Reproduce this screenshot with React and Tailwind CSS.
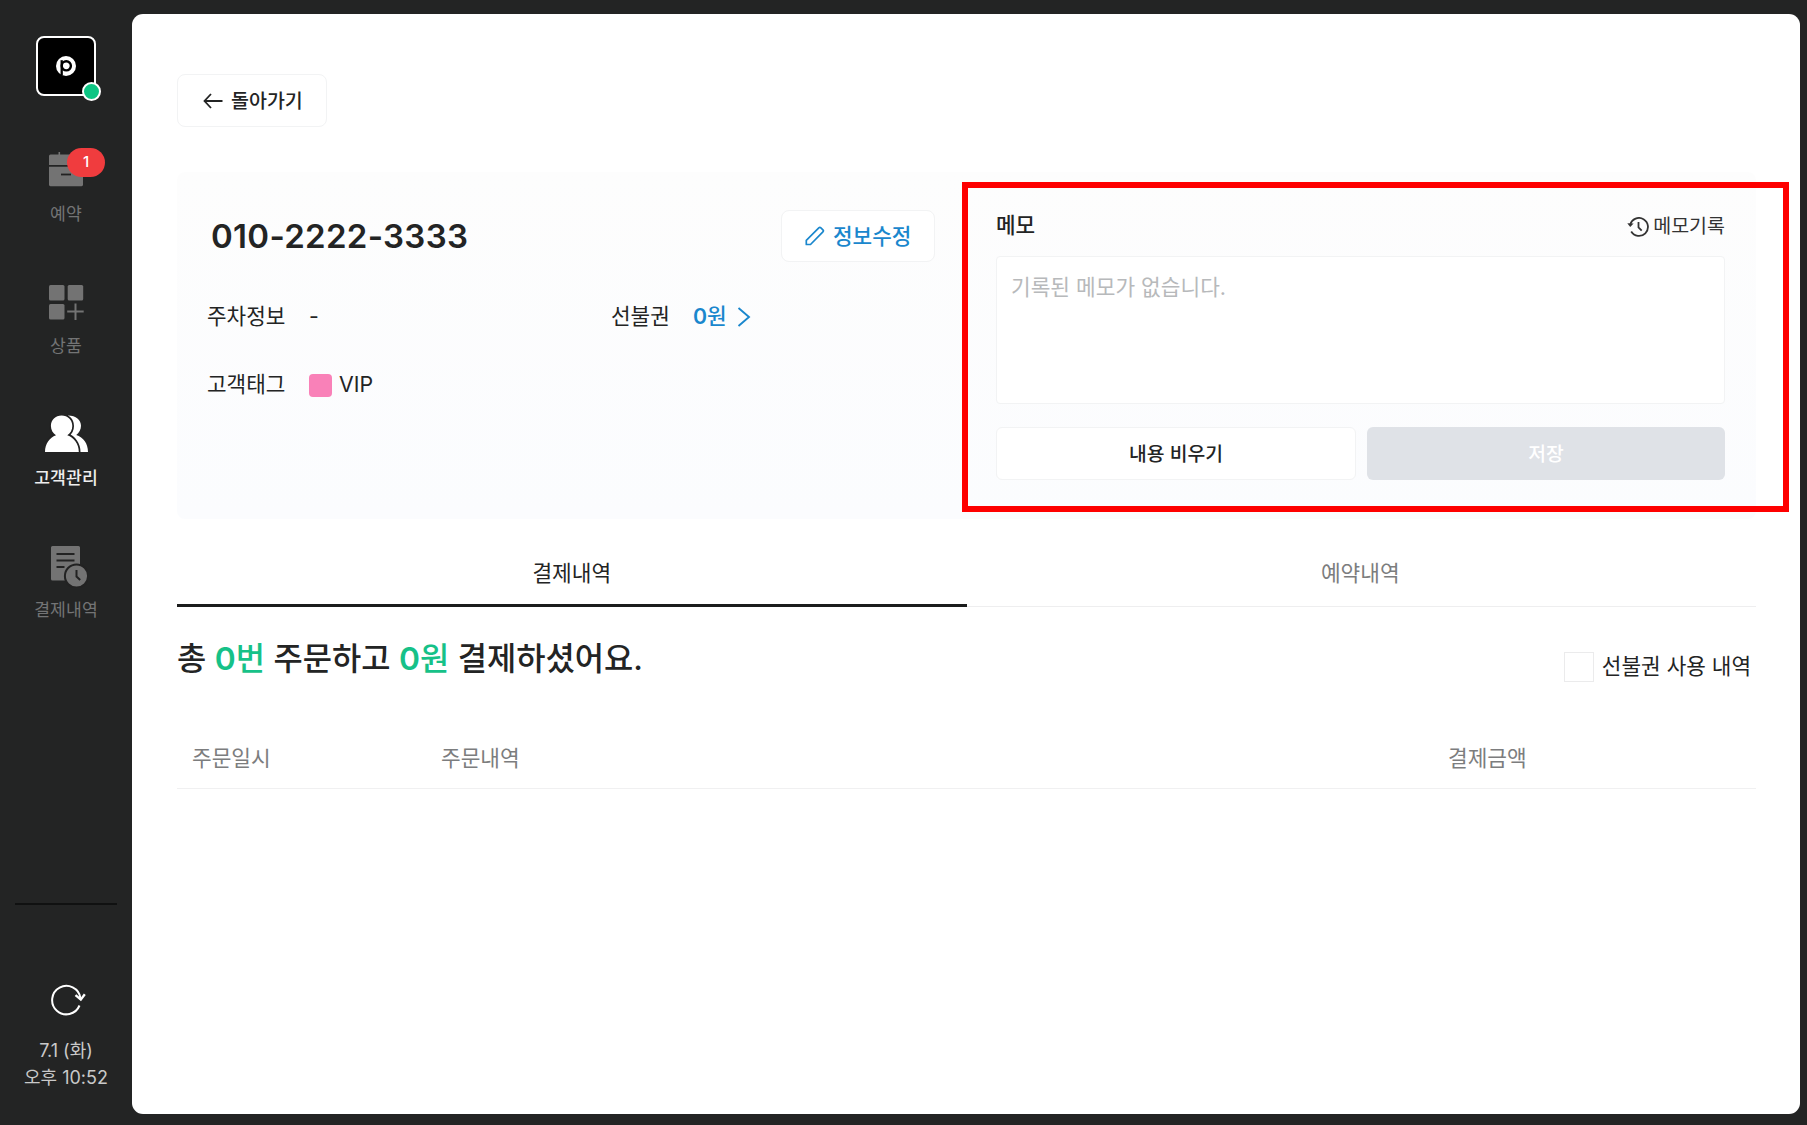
const cardBorder = 'border border-[#f2f3f4]';

function CalendarIcon() {
    return (
        <svg width="34" height="35" viewBox="0 0 34 35" fill="#737373">
            <path d="M9.5 0h1.6v2.5H34V13H0V4a1.5 1.5 0 0 1 1.5-1.5h8z" />
            <path d="M0 14.8h34v18a1.4 1.4 0 0 1-1.4 1.4H1.4A1.4 1.4 0 0 1 0 32.8z" />
            <path d="M12 22.5h10" stroke="#222" strokeWidth="1.8" />
        </svg>
    );
}

function ProductIcon() {
    return (
        <svg width="35" height="36" viewBox="0 0 35 36" fill="#737373">
            <rect x="0" y="0" width="15.5" height="15.5" rx="1.5" />
            <rect x="18.7" y="0" width="15.5" height="15.5" rx="1.5" />
            <rect x="0" y="19" width="15.5" height="15.5" rx="1.5" />
            <path d="M26.5 18.5v16.5M18.2 26.5h16.5" stroke="#737373" strokeWidth="2" />
        </svg>
    );
}

function CustomerIcon() {
    return (
        <svg className="ml-px" width="43" height="38" viewBox="0 0 43 38" fill="#fff">
            <path d="M23 .5C31 .5 36 5 36 10.8c0 4-2 7.2-4.8 9.2C38.5 22.3 43 28.8 43 37H26z" />
            <path d="M16.6.5c6.1 0 10.7 4.6 10.7 10.5 0 4-2 7.3-5 9.2C29 22.3 33.8 29 33.8 37H0c0-8 4.5-14.7 11-16.8-3-1.9-5.100-5.200-5.100-9.200C5.900 5.100 10.500.5 16.600.5z" stroke="#222" strokeWidth="3.4" paintOrder="stroke" />
        </svg>
    );
}

function HistoryIcon() {
    return (
        <svg className="ml-[6px]" width="37" height="42" viewBox="0 0 37 42" fill="#737373">
            <path d="M1.5 0h26A1.5 1.5 0 0 1 29 1.5V34.5H1.5A1.5 1.5 0 0 1 0 33V1.5A1.5 1.5 0 0 1 1.5 0z" />
            <path d="M5.5 8h18M5.5 14.5h18M5.5 21h8" stroke="#222" strokeWidth="1.9" />
            <circle cx="25.5" cy="30" r="11.6" stroke="#222" strokeWidth="2" />
            <path d="M25.5 24v6.5l3.7 3.5" fill="none" stroke="#222" strokeWidth="2" />
        </svg>
    );
}

const menus = [
    { label: '예약', Icon: CalendarIcon, badge: 1, height: 'h-[35px]', gap: 'mt-[56px]' },
    { label: '상품', Icon: ProductIcon, height: 'h-[34px]', gap: 'mt-[59px]' },
    { label: '고객관리', Icon: CustomerIcon, active: true, height: 'h-[36px]', gap: 'mt-[57px]' },
    { label: '결제내역', Icon: HistoryIcon, height: 'h-[37px]', gap: 'mt-[56px]' },
];

function Sidebar() {
    return (
        <aside className="flex w-[132px] shrink-0 flex-col items-center bg-[#232424]">
            <div className="relative mt-[36px] flex size-[60px] items-center justify-center rounded-lg border-2 border-white bg-black">
                <svg width="20" height="20" viewBox="0 0 20 20">
                    <circle cx="10" cy="10" r="10" fill="#fff" />
                    <circle cx="10.3" cy="9.8" r="4.6" fill="none" stroke="#000" strokeWidth="2.4" />
                    <path d="M5.7 4.2v15" stroke="#000" strokeWidth="2.3" />
                </svg>
                <span className="absolute -right-[7px] -bottom-[7px] size-[19px] rounded-full border-2 border-white bg-[#0cc583]" />
            </div>

            {menus.map(({ label, Icon, badge, active, height, gap }) => (
                <div key={label} className={`relative flex flex-col items-center first-of-type:mt-0 ${gap}`}>
                    <div className={height}>
                        <Icon />
                    </div>
                    {badge && (
                        <span className="absolute -top-[4px] left-[18px] flex h-[29px] w-[38px] items-center justify-center rounded-full bg-[#f03c3e] text-[15px] font-medium text-white">
                            {badge}
                        </span>
                    )}
                    <span className={`mt-[14px] text-[17.2px] leading-[25px] tracking-[0.1px] ${active ? 'font-medium text-[#eee]' : 'text-[#737475]'}`}>
                        {label}
                    </span>
                </div>
            ))}

            <div className="mt-[281px] h-[2px] w-[102px] bg-[#101111]" />
            <svg className="mt-[79px] ml-[3px]" width="36" height="32" viewBox="0 0 36 32" fill="none" stroke="#fff" strokeWidth="2">
                <path d="M29.5 21.5A14.2 14.2 0 1 1 30.4 14" />
                <path d="M25.5 11.2l5.3 4.4 4-5.3" strokeWidth="2.4" />
            </svg>
            <div className="mt-[21px] text-center text-[18px] leading-[27px] text-[#c9c9c9]">
                <p>7.1 (화)</p>
                <p>오후 10:52</p>
            </div>
        </aside>
    );
}

function CustomerInfo() {
    return (
        <section className="flex w-[758px] flex-col pl-[30px] text-[21.3px]">
            <div className="mt-[38px] flex h-[52px] items-center justify-between">
                <h1 className="pt-px pl-[4px] text-[33px] font-semibold tracking-[0.3px]">010-2222-3333</h1>
                <button className={`flex h-[52px] w-[154px] items-center rounded-lg bg-white pl-[23px] text-[#1a87cd] ${cardBorder}`}>
                    <svg width="20" height="20" viewBox="0 0 20 20" fill="none" stroke="#1a87cd" strokeWidth="1.7">
                        <path d="M1.3 18.5v-4.2L13.8 1.8a1.5 1.5 0 0 1 2.1 0l2 2a1.5 1.5 0 0 1 0 2.1L5.5 18.5z" strokeLinejoin="round" />
                    </svg>
                    <span className="ml-[8px] pt-[2px] font-medium">정보수정</span>
                </button>
            </div>

            <div className="mt-[39px] flex h-[32px] items-center">
                <span className="w-[102px]">주차정보</span>
                <span className="w-[302px]">-</span>
                <span className="w-[82px]">선불권</span>
                <span className="font-medium text-[#1a87cd]"><span className="font-semibold">0</span>원</span>
                <svg className="ml-[10px]" width="14" height="20" viewBox="0 0 14 20" fill="none" stroke="#1a87cd" strokeWidth="1.9">
                    <path d="M1.5 1l10.5 9-10.5 9" />
                </svg>
            </div>

            <div className="mt-[36px] flex h-[32px] items-center">
                <span className="w-[102px]">고객태그</span>
                <span className="size-[23px] rounded bg-[#f981b8]" />
                <span className="ml-[7px]">VIP</span>
            </div>
        </section>
    );
}

function Memo() {
    return (
        <section className="mt-[10px] -mr-[33px] ml-[27px] flex h-[330px] w-[827px] flex-col border-[6px] border-[#fe0000] pt-[22px] pr-[58px] pl-[28px]">
            <div className="flex h-[32px] items-center justify-between">
                <h2 className="text-[21.3px] font-medium">메모</h2>
                <div className="flex items-center gap-[4px] pt-px text-[19.5px] text-[#333]">
                    <svg width="22" height="20" viewBox="0 0 22 20" fill="none" stroke="#333" strokeWidth="1.8">
                        <path d="M3.3 7.5A9 9 0 1 1 4.2 14.5" />
                        <path d="M.3 6.2l6.3.3L3.2 10z" fill="#333" stroke="none" />
                        <path d="M11.5 5v5.5l3.2 3.2" />
                    </svg>
                    <span>메모기록</span>
                </div>
            </div>
            <textarea
                className={`mt-[14px] h-[148px] w-full resize-none rounded-sm bg-white px-[14px] py-[15px] text-[21.4px] leading-[30px] placeholder:text-[#b7b9bb] ${cardBorder}`}
                placeholder="기록된 메모가 없습니다."
            />
            <div className="mt-[23px] flex gap-[11px] text-[19.3px] font-medium">
                <button className={`h-[53px] flex-1 rounded-md bg-white pt-[2px] ${cardBorder}`}>내용 비우기</button>
                <button className="h-[53px] flex-1 rounded-md bg-[#dfe2e7] pt-[2px] text-white">저장</button>
            </div>
        </section>
    );
}

export default function App() {
    return (
        <div className="flex h-[1125px] w-[1807px] overflow-hidden bg-[#232424] font-[Inter,'Noto_Sans_CJK_KR',sans-serif] text-[#232424]">
            <Sidebar />
            <main className="mt-[14px] flex h-[1100px] w-[1668px] flex-col rounded-[11px] bg-white pr-[44px] pl-[45px]">
                <button className={`mt-[60px] flex h-[53px] w-[150px] items-center rounded-lg bg-white pl-[25px] ${cardBorder}`}>
                    <svg width="20" height="16" viewBox="0 0 20 16" fill="none" stroke="#232424" strokeWidth="1.8">
                        <path d="M19.5 8H1.5M8 1L1.5 8 8 15" />
                    </svg>
                    <span className="ml-[8px] pt-[2px] text-[19.5px] font-medium">돌아가기</span>
                </button>

                <div className="mt-[45px] flex h-[347px] shrink-0 rounded-lg bg-linear-to-b from-[#fdfdfd] to-[#fbfcfe]">
                    <CustomerInfo />
                    <Memo />
                </div>

                <div className="mt-[18px] flex h-[70px] shrink-0 text-[21.4px]">
                    <div className="flex w-1/2 items-center justify-center border-b-[3px] border-[#1b1c1c] pt-[5px]">결제내역</div>
                    <div className="flex w-1/2 items-center justify-center border-b border-[#eeeeef] pt-[3px] pr-[2px] text-[#7c7d7e]">예약내역</div>
                </div>

                <div className="mt-[32px] flex h-[87px] shrink-0 items-start justify-between">
                    <p className="text-[31.8px] leading-[40px] font-medium">
                        총 <span className="text-[#16c188]"><span className="font-semibold">0</span>번</span> 주문하고{' '}
                        <span className="text-[#16c188]"><span className="font-semibold">0</span>원</span> 결제하셨어요.
                    </p>
                    <label className="mt-[13px] mr-[5px] flex h-[30px] items-center text-[21.3px]">
                        <input type="checkbox" className="mr-[8px] size-[30px] appearance-none border border-[#ebebec] bg-white" />
                        선불권 사용 내역
                    </label>
                </div>

                <div className="flex h-[63px] shrink-0 items-center border-b border-[#f0f0f1] pt-[2px] pl-[15px] text-[21.4px] text-[#7c7d7e]">
                    <span className="w-[249px]">주문일시</span>
                    <span className="w-[1007px]">주문내역</span>
                    <span>결제금액</span>
                </div>
            </main>
        </div>
    );
}
